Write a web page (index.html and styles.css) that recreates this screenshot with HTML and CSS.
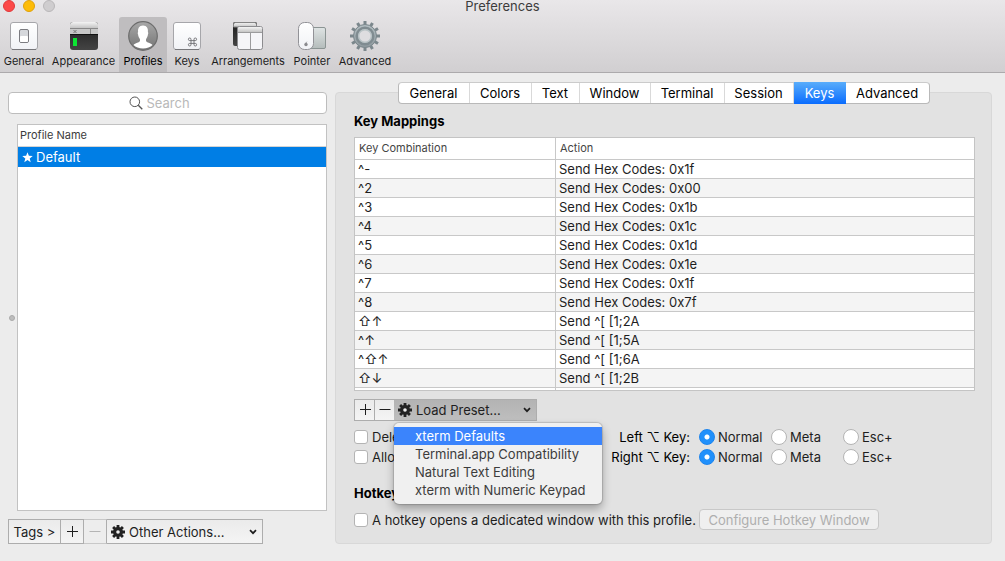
FILE: index.html
```
<!DOCTYPE html>
<html lang="en">
<head>
<meta charset="utf-8">
<title>Preferences</title>
<link rel="stylesheet" href="styles.css">
</head>
<body>
<svg class="defs" width="0" height="0" aria-hidden="true">
  <defs>
    <linearGradient id="plate" x1="0" y1="0" x2="0" y2="1"><stop offset="0" stop-color="#fff"/><stop offset="1" stop-color="#f1f2f6"/></linearGradient>
    <linearGradient id="bar" x1="0" y1="0" x2="0" y2="1"><stop offset="0" stop-color="#f4f4f4"/><stop offset="1" stop-color="#c4c4c4"/></linearGradient>
    <linearGradient id="dark" x1="0" y1="0" x2="0" y2="1"><stop offset="0" stop-color="#1c1c1c"/><stop offset="1" stop-color="#444"/></linearGradient>
    <linearGradient id="disc" x1="0" y1="0" x2="0" y2="1"><stop offset="0" stop-color="#a8a8a8"/><stop offset="1" stop-color="#747474"/></linearGradient>
    <linearGradient id="pad" x1="0" y1="0" x2="0" y2="1"><stop offset="0" stop-color="#dfe4e4"/><stop offset="1" stop-color="#b4bcbb"/></linearGradient>
    <linearGradient id="steel" x1="0" y1="0" x2="0" y2="1"><stop offset="0" stop-color="#b4bfc3"/><stop offset="1" stop-color="#8f9a9f"/></linearGradient>
    <symbol id="gear" viewBox="0 0 14 14">
      <g stroke="currentColor" stroke-width="2.8"><path d="M7 0v14M0 7h14M2.1 2.1l9.8 9.8M11.9 2.1l-9.8 9.8"/></g>
      <circle cx="7" cy="7" r="4.9" fill="currentColor"/><circle class="gear-hole" cx="7" cy="7" r="1.8"/>
    </symbol>
    <symbol id="chevron" viewBox="0 0 8 6"><path d="M1 1.2l3 3 3-3" fill="none" stroke="currentColor" stroke-width="1.7"/></symbol>
    <symbol id="plus" viewBox="0 0 12 12"><path d="M6.500 0v11M1 5.500h11" stroke="currentColor"/></symbol>
    <symbol id="minus" viewBox="0 0 12 12"><path d="M.5 5.500h11" stroke="currentColor"/></symbol>
  </defs>
</svg>

<header class="titlebar">
  <div class="title-row">
    <div class="lights">
      <button class="light light-close" aria-label="Close"></button>
      <button class="light light-min" aria-label="Minimize"></button>
      <button class="light light-zoom" aria-label="Zoom" disabled></button>
    </div>
    <h1 class="title">Preferences</h1>
  </div>
  <nav class="toolbar">
    <button class="tool tool-general">
      <svg class="tool-icon" viewBox="0 0 32 32"><rect x="2.500" y="2.500" width="27" height="27" rx="2.500" fill="url(#plate)" stroke="#a6a6aa"/><path d="M4 29.500h24" stroke="#77777b"/><rect x="11.500" y="9.500" width="9" height="13" rx="1.500" fill="#d6d8dc" stroke="#7b7b80"/><rect x="12" y="16" width="8" height="6" rx="1" fill="#fff"/></svg>
      <span>General</span>
    </button>
    <button class="tool tool-appearance">
      <svg class="tool-icon" viewBox="0 0 32 32"><rect x="2" y="2" width="28" height="28" rx="3" fill="url(#dark)"/><path d="M2 8V5q0-3 3-3h22q3 0 3 3v3z" fill="url(#bar)"/><path d="M2 8h28v7H2z" fill="#c8c8c8"/><path d="M2 8.500h28M22.500 8v7" stroke="#888"/><path d="M2 14.500h28" stroke="#111"/><path d="M5.500 10l3 3m0-3l-3 3" stroke="#777" fill="none"/><path d="M5 18h4v8H5z" fill="#0be532"/></svg>
      <span>Appearance</span>
    </button>
    <button class="tool tool-profiles" aria-pressed="true">
      <svg class="tool-icon" viewBox="0 0 32 32"><circle cx="16" cy="16" r="14.300" fill="url(#disc)" stroke="#6d6d6d" stroke-width="1.200"/><path d="M6.500 25c1.500-2.200 6-2.200 6.500-4.200.2-1-.1-1.900-.7-2.800-.7-1.200-1.100-2-1.200-3.500-.4-.7-.5-1.900 0-2.500C10.700 8.500 12 5.500 16 5.500s5.300 3 4.900 6.500c.5.600.4 1.800 0 2.500-.1 1.500-.5 2.300-1.200 3.500-.6.900-.9 1.800-.7 2.800.5 2 5 2 6.500 4.200-2.200 2.200-5.500 3.500-9.500 3.500s-7.300-1.300-9.500-3.500z" fill="#fff"/></svg>
      <span>Profiles</span>
    </button>
    <button class="tool tool-keys">
      <svg class="tool-icon" viewBox="0 0 32 32"><rect x="2.500" y="2.500" width="27" height="27" rx="2.500" fill="url(#plate)" stroke="#a6a6aa"/><path d="M4 29.500h24" stroke="#77777b"/><path d="M20 20.500v-1.200a1.300 1.300 0 1 0-1.300 1.300h5.600a1.300 1.300 0 1 0-1.300-1.300v5.400a1.300 1.300 0 1 0 1.300-1.300h-5.600a1.300 1.300 0 1 0 1.300 1.300z" fill="none" stroke="#6d6d72" stroke-width=".9"/></svg>
      <span>Keys</span>
    </button>
    <button class="tool tool-arrangements">
      <svg class="tool-icon" viewBox="0 0 32 32"><rect x="1" y="2" width="24" height="24" rx="2" fill="url(#dark)"/><path d="M1.500 7V4.500q0-2 2-2h19q2 0 2 2V7z" fill="url(#bar)" stroke="#858585"/><rect x="5.500" y="6.500" width="25" height="23" rx="2" fill="#f5f5f8" stroke="#8c8c8f"/><path d="M6 12V8.500q0-1.500 1.500-1.500h21q1.500 0 1.500 1.500V12z" fill="url(#bar)"/><path d="M6 12.500h24M18.500 13v16" stroke="#9b9b9d"/></svg>
      <span>Arrangements</span>
    </button>
    <button class="tool tool-pointer">
      <svg class="tool-icon" viewBox="0 0 32 32"><rect x="13.500" y="7.500" width="16" height="21" rx="1.500" fill="url(#pad)" stroke="#8b9493"/><rect x="2.500" y="2.500" width="15" height="27" rx="6" fill="url(#plate)" stroke="#929297"/><circle cx="10" cy="24.500" r="1.700" fill="#8a8a8e"/><path d="M10 22.800l.8-1" stroke="#8a8a8e"/></svg>
      <span>Pointer</span>
    </button>
    <button class="tool tool-advanced">
      <svg class="tool-icon" viewBox="0 0 32 32"><g fill="none" stroke="#7b878c" stroke-width="3"><path id="spoke" d="M16 1v30"/><use href="#spoke" transform="rotate(30 16 16)"/><use href="#spoke" transform="rotate(60 16 16)"/><use href="#spoke" transform="rotate(90 16 16)"/><use href="#spoke" transform="rotate(120 16 16)"/><use href="#spoke" transform="rotate(150 16 16)"/></g><circle cx="16" cy="16" r="11.500" fill="url(#steel)" stroke="#7b878c"/><circle cx="16" cy="16" r="8.300" fill="none" stroke="#808c91" stroke-width="2.500"/><circle cx="16" cy="16" r="6.300" fill="#dedde0" stroke="#b9c3c6" stroke-width="1.400"/></svg>
      <span>Advanced</span>
    </button>
  </nav>
</header>

<main class="content">
  <aside class="sidebar">
    <label class="search">
      <svg class="search-icon" viewBox="0 0 14 14"><circle cx="5.800" cy="5.800" r="4.800" fill="none" stroke="#555"/><path d="M9.300 9.300l4 4" stroke="#555" stroke-width="1.300"/></svg>
      <input class="search-input" type="text" placeholder="Search" aria-label="Search profiles">
    </label>
    <div class="list-row">
      <div class="splitter"><span class="splitter-dot"></span></div>
      <div class="list-frame">
        <table class="profiles">
          <thead><tr><th>Profile Name</th></tr></thead>
          <tbody><tr><td><svg class="star" viewBox="0 0 12 12"><path d="M6 .3l1.500 3.900 4.200.2-3.300 2.600 1.100 4.100L6 8.800l-3.500 2.300L3.600 7 .3 4.400l4.200-.2z" fill="#fff"/></svg>Default</td></tr></tbody>
        </table>
      </div>
    </div>
    <div class="actions">
      <button class="square tags">Tags &gt;</button>
      <button class="square add" aria-label="Add profile"><svg class="sign"><use href="#plus"/></svg></button>
      <button class="square remove" aria-label="Remove profile" disabled><svg class="sign"><use href="#minus"/></svg></button>
      <label class="square pulldown other">
        <svg class="gear"><use href="#gear"/></svg>
        <select class="pulldown-select" aria-label="Other actions"><option>Other Actions...</option></select>
        <svg class="chevron"><use href="#chevron"/></svg>
      </label>
    </div>
  </aside>

  <section class="detail">
    <div class="tabs" role="tablist">
      <button class="tab tab-general" role="tab">General</button>
      <button class="tab tab-colors" role="tab">Colors</button>
      <button class="tab tab-text" role="tab">Text</button>
      <button class="tab tab-window" role="tab">Window</button>
      <button class="tab tab-terminal" role="tab">Terminal</button>
      <button class="tab tab-session" role="tab">Session</button>
      <button class="tab tab-keys" role="tab" aria-selected="true">Keys</button>
      <button class="tab tab-advanced" role="tab">Advanced</button>
    </div>
    <div class="panel">
      <h2 class="heading">Key Mappings</h2>
      <div class="map-frame">
        <table class="map">
          <thead><tr><th class="combo">Key Combination</th><th>Action</th></tr></thead>
          <tbody>
            <tr><td>^-</td><td>Send Hex Codes: 0x1f</td></tr>
            <tr><td>^2</td><td>Send Hex Codes: 0x00</td></tr>
            <tr><td>^3</td><td>Send Hex Codes: 0x1b</td></tr>
            <tr><td>^4</td><td>Send Hex Codes: 0x1c</td></tr>
            <tr><td>^5</td><td>Send Hex Codes: 0x1d</td></tr>
            <tr><td>^6</td><td>Send Hex Codes: 0x1e</td></tr>
            <tr><td>^7</td><td>Send Hex Codes: 0x1f</td></tr>
            <tr><td>^8</td><td>Send Hex Codes: 0x7f</td></tr>
            <tr><td>⇧↑</td><td>Send ^[ [1;2A</td></tr>
            <tr><td>^↑</td><td>Send ^[ [1;5A</td></tr>
            <tr><td>^⇧↑</td><td>Send ^[ [1;6A</td></tr>
            <tr><td>⇧↓</td><td>Send ^[ [1;2B</td></tr>
            <tr><td></td><td></td></tr>
          </tbody>
        </table>
      </div>
      <div class="map-actions">
        <button class="square map-add" aria-label="Add mapping"><svg class="sign"><use href="#plus"/></svg></button>
        <button class="square map-remove" aria-label="Remove mapping"><svg class="sign"><use href="#minus"/></svg></button>
        <div class="preset">
          <button class="square pulldown preset-button" aria-haspopup="menu" aria-expanded="true">
            <svg class="gear"><use href="#gear"/></svg>
            <span class="pulldown-text">Load Preset...</span>
            <svg class="chevron"><use href="#chevron"/></svg>
          </button>
          <div class="menu" role="menu">
            <button class="menu-item menu-item-active" role="menuitem">xterm Defaults</button>
            <button class="menu-item" role="menuitem">Terminal.app Compatibility</button>
            <button class="menu-item" role="menuitem">Natural Text Editing</button>
            <button class="menu-item" role="menuitem">xterm with Numeric Keypad</button>
          </div>
        </div>
      </div>
      <div class="options">
        <label class="choice"><input class="check" type="checkbox">Delete</label>
        <span class="option-label" id="left-key">Left ⌥ Key:</span>
        <div class="radios" role="radiogroup" aria-labelledby="left-key">
          <label class="choice"><input class="radio" type="radio" name="left" checked>Normal</label>
          <label class="choice"><input class="radio" type="radio" name="left">Meta</label>
          <label class="choice"><input class="radio" type="radio" name="left">Esc+</label>
        </div>
        <label class="choice"><input class="check" type="checkbox">Allow</label>
        <span class="option-label" id="right-key">Right ⌥ Key:</span>
        <div class="radios" role="radiogroup" aria-labelledby="right-key">
          <label class="choice"><input class="radio" type="radio" name="right" checked>Normal</label>
          <label class="choice"><input class="radio" type="radio" name="right">Meta</label>
          <label class="choice"><input class="radio" type="radio" name="right">Esc+</label>
        </div>
      </div>
      <h2 class="heading">Hotkey</h2>
      <div class="hotkey">
        <label class="choice"><input class="check" type="checkbox">A hotkey opens a dedicated window with this profile.</label>
        <button class="configure" disabled>Configure Hotkey Window</button>
      </div>
    </div>
  </section>
</main>
</body>
</html>
```
FILE: styles.css
```
* { box-sizing: border-box; }

body {
  margin: 0;
  height: 100vh;
  display: flex;
  flex-direction: column;
  overflow: hidden;
  background: #ececec;
  color: #1e1e1e;
  font: 13px/18px Inter, "Liberation Sans", sans-serif;
}

button, input, select { font: inherit; color: inherit; margin: 0; padding: 0; }
button { border: 0; background: none; }
svg { display: block; flex: none; }
.defs { position: absolute; }

/* Title bar and toolbar */
.titlebar {
  background: linear-gradient(#e9e7e9, #d1cfd1);
  border-bottom: 1px solid #acaaac;
}
.title-row {
  display: grid;
  grid-template-columns: 1fr auto 1fr;
  height: 17px;
}
.lights { display: flex; gap: 8px; padding-left: 3px; }
.light { width: 12px; height: 12px; border-radius: 50%; border: 1px solid; }
.light-close { background: #fc4948; border-color: #e0383a; }
.light-min { background: #fdbc08; border-color: #e0a10a; }
.light-zoom { background: #cfcdcf; border-color: #b9b7b9; }
.title { margin: 0; font-size: 13px; line-height: 13px; font-weight: 400; color: #3c3c3c; }
.toolbar { display: flex; }
.tool {
  display: flex;
  flex-direction: column;
  align-items: center;
  height: 55px;
  padding-top: 3px;
  font-size: 11px;
  line-height: 16px;
  white-space: nowrap;
}
.tool-icon { width: 32px; height: 32px; margin-bottom: 1px; }
.tool[aria-pressed="true"] { background: #bfbdbf; border-radius: 3px 3px 0 0; color: #000; }
.tool-general { width: 48px; }
.tool-appearance { width: 71px; }
.tool-profiles { width: 48px; }
.tool-keys { width: 40px; }
.tool-arrangements { width: 82px; }
.tool-pointer { width: 46px; }
.tool-advanced { width: 60px; }

.content {
  flex: 1;
  min-height: 0;
  display: grid;
  grid-template-columns: 319px 1fr;
  gap: 8px;
  padding: 9px 13px 17px 8px;
}

/* Profile list */
.sidebar { display: flex; flex-direction: column; min-height: 0; padding-top: 10px; }
.search {
  display: flex;
  align-items: center;
  justify-content: center;
  gap: 4px;
  height: 22px;
  background: #fff;
  border: 1px solid #bdbdbd;
  border-radius: 4px;
}
.search-icon { width: 14px; height: 14px; }
.search-input { width: 60px; border: 0; outline: 0; background: none; }
.search-input::placeholder { color: #b9b9b9; opacity: 1; }
.list-row { flex: 1; min-height: 0; display: flex; margin: 10px 0 8px; }
.splitter { width: 9px; display: flex; align-items: center; }
.splitter-dot { width: 6px; height: 6px; margin-left: 1px; border-radius: 50%; background: #bdbdbd; border: 1px solid #aaa; }
.list-frame { flex: 1; background: #fff; border: 1px solid #c2c2c2; }
.profiles { width: 100%; border-collapse: separate; border-spacing: 0; }
.profiles th {
  height: 22px;
  padding: 0 2px 2px;
  border-bottom: 1px solid #d4d4d4;
  text-align: left;
  font-size: 11px;
  line-height: 16px;
  font-weight: 400;
  color: #3c3c3c;
}
.profiles td { height: 20px; padding: 0 4px; background: #007ee5; color: #fff; }
.star { display: inline-block; width: 11px; height: 11px; margin-right: 3px; vertical-align: -1px; }

/* Square buttons and pull-downs */
.square {
  display: flex;
  align-items: center;
  justify-content: center;
  border: 1px solid #adadad;
  background: linear-gradient(#ebebeb, #f4f4f4);
}
.square + .square { border-left: 0; }
.sign { width: 12px; height: 12px; }
.actions { display: flex; height: 25px; }
.tags { width: 53px; }
.add { width: 23px; }
.remove { width: 23px; border-color: #c8c8c8; border-right-color: #adadad; color: #b4b4b4; background: #ededed; }
.pulldown { justify-content: flex-start; padding: 0 5px 0 4px; }
.other { width: 156px; }
.gear { width: 14px; height: 14px; margin-right: 4px; color: #222; }
.gear-hole { fill: #eee; }
.pulldown-select { flex: 1; min-width: 0; appearance: none; border: 0; outline: 0; background: none; }
.pulldown-text { flex: 1; text-align: left; }
.chevron { width: 8px; height: 6px; }

/* Detail pane */
.detail { display: flex; flex-direction: column; min-width: 0; min-height: 0; }
.tabs {
  position: relative;
  align-self: center;
  display: flex;
  height: 22px;
  background: #fff;
  border: 1px solid #b9b9b9;
  border-top-color: #cbcbcb;
  border-radius: 4px;
  color: #000;
}
.tab { padding-bottom: 1px; border-right: 1px solid #d9d9d9; }
.tab:last-child { border-right: 0; }
.tab-general { width: 71px; }
.tab-colors { width: 62px; }
.tab-text { width: 48px; }
.tab-window { width: 71px; }
.tab-terminal { width: 74px; }
.tab-session { width: 69px; }
.tab-keys { width: 52px; }
.tab-advanced { width: 83px; }
.tab[aria-selected="true"] {
  margin: -1px 0;
  border: 0;
  background: linear-gradient(#59adfb, #0a6cfe);
  color: #fff;
}
.panel {
  flex: 1;
  min-height: 0;
  display: flex;
  flex-direction: column;
  margin-top: -12px;
  padding: 19px 16px 13px 18px;
  background: #e2e2e2;
  border: 1px solid #d8d8d8;
  border-radius: 4px;
}
.heading { margin: 0; font-size: 13px; line-height: 18px; font-weight: 700; color: #000; }
.map-frame {
  flex: 1;
  min-height: 0;
  overflow: hidden;
  margin: 7px 0 8px;
  background: #fff;
  border: 1px solid #c4c4c4;
}
.map { width: 100%; border-collapse: separate; border-spacing: 0; table-layout: fixed; }
.map th {
  height: 22px;
  padding: 0 4px 2px;
  border-bottom: 1px solid #c8c8c8;
  text-align: left;
  font-size: 11px;
  line-height: 16px;
  font-weight: 400;
  color: #444;
}
.map td { height: 19px; padding: 1px 3px 0; line-height: 17px; border-bottom: 1px solid #c8c8c8; }
.map td:first-child, .combo { border-right: 1px solid #c8c8c8; }
.combo { width: 201px; }
.map tbody tr:nth-child(even) td { background: #f4f4f4; }
.map-actions { display: flex; height: 22px; }
.map-add { width: 21px; }
.map-remove { width: 19px; border-right: 0; }
.preset { position: relative; width: 143px; }
.preset-button { width: 100%; height: 22px; border-left: 0; background: linear-gradient(#b3b3b3, #bebebe); }
.preset .gear-hole { fill: #b8b8b8; }

.menu {
  position: absolute;
  z-index: 2;
  top: 24px;
  left: 0;
  width: 208px;
  padding: 4px 0 5px;
  background: #f0f0f0;
  border-radius: 5px;
  box-shadow: 0 0 1px 1px rgba(0, 0, 0, .15), 0 5px 10px rgba(0, 0, 0, .3);
  color: #3c3c3c;
}
.menu-item { display: block; width: 100%; height: 18px; padding-left: 21px; text-align: left; white-space: nowrap; }
.menu-item-active { background: #3b84fc; color: #fff; }

.options {
  display: grid;
  grid-template-columns: 216px 120px 1fr;
  grid-auto-rows: 20px;
  align-items: center;
  margin: 6px 0 17px;
}
.option-label { text-align: right; color: #000; }
.radios { display: grid; grid-template-columns: 72px 72px auto; padding-left: 9px; }
.choice { display: flex; align-items: center; gap: 4px; white-space: nowrap; }
.check, .radio {
  appearance: none;
  flex: none;
  width: 14px;
  height: 14px;
  background: #fff;
  border: 1px solid #b4b4b4;
  border-radius: 3px;
}
.radio { width: 16px; height: 16px; border-radius: 50%; }
.radios .choice { gap: 3px; }
.radio:checked { background: radial-gradient(circle, #fff 0 2px, #2090fb 3px); border-color: #1c84ee; }
.hotkey { display: grid; grid-template-columns: 345px 180px; align-items: center; margin-top: 7px; height: 21px; }
.configure {
  height: 21px;
  background: #efefef;
  border: 1px solid #c8c8c8;
  border-radius: 4px;
  color: #aeaeae;
}
```
